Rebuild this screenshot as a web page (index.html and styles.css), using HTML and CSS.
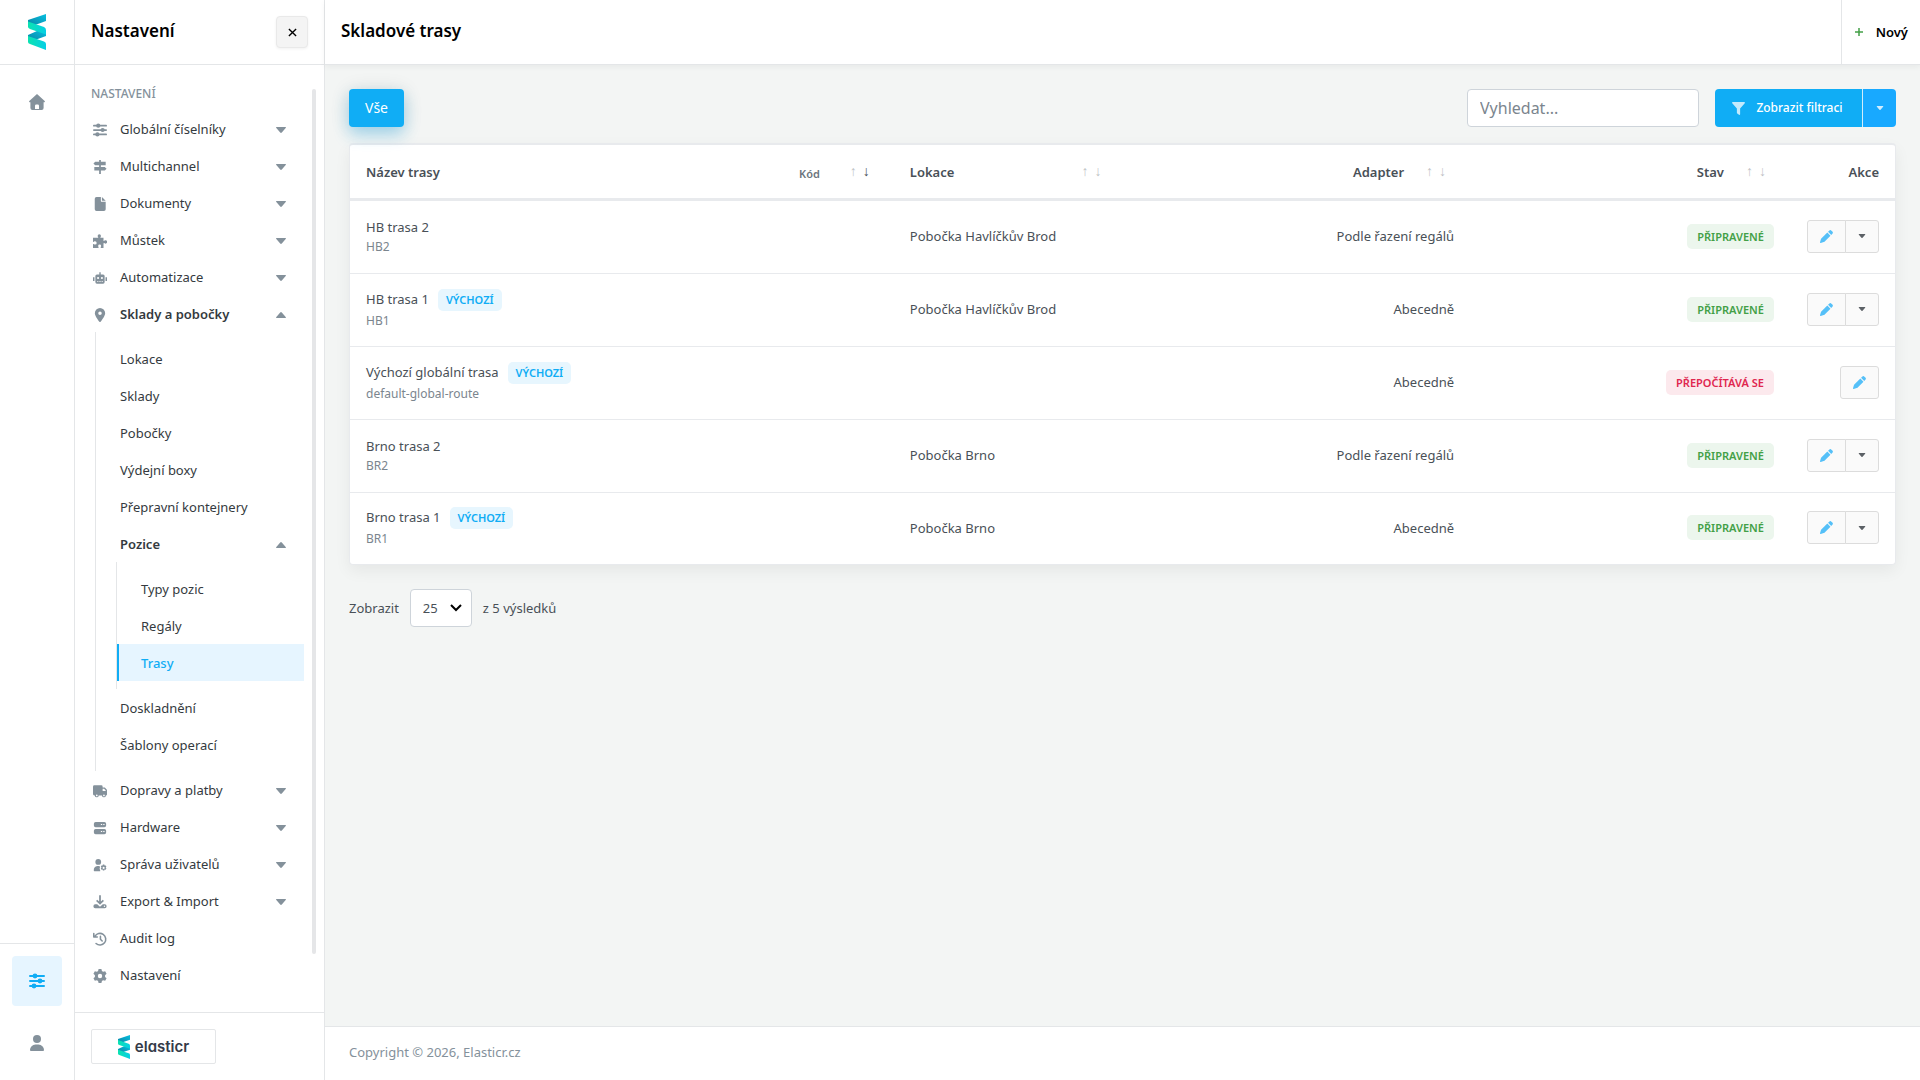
FILE: index.html
```
<!DOCTYPE html>
<html lang="cs">
<head>
    <meta charset="UTF-8">
    <meta name="viewport" content="width=device-width, initial-scale=1.0">
    <title>Skladové trasy</title>
    <link rel="stylesheet" href="styles.css">
</head>
<body>
    <svg class="sprite" aria-hidden="true">
        <defs>
            <linearGradient id="ribbon-dark" x1="0" y1="1" x2="1" y2="0">
                <stop offset="0" stop-color="#0a86a8"/>
                <stop offset="1" stop-color="#06c0e0"/>
            </linearGradient>
            <linearGradient id="ribbon-light" x1="0" y1="0" x2="1" y2="0">
                <stop offset="0" stop-color="#0be3b0"/>
                <stop offset="1" stop-color="#05cfe6"/>
            </linearGradient>
        </defs>
        <symbol id="logo" viewBox="0 0 18 36">
            <path fill="url(#ribbon-dark)" d="M0 6 18 0v7L7 11 0 9z"/>
            <path fill="url(#ribbon-dark)" d="M18 16v6L7 26 0 23v-2l9-4z"/>
            <path fill="url(#ribbon-light)" d="M0 7.500l16 5.500q2 1 2 3v4.500L2 15q-2-1-2-2z"/>
            <path fill="url(#ribbon-light)" d="M0 22l16 5.500q2 .5 2 2.500v6L2 30q-2-.5-2-2z"/>
        </symbol>
        <symbol id="home" viewBox="0 0 16 16">
            <path fill-rule="evenodd" d="M8 0l7.700 6.900q.6.700-.2 1.300h-.9V14a2 2 0 0 1-2 2H3.400a2 2 0 0 1-2-2V8.200H.5Q-.3 7.600.3 6.900zM6 15h4v-3.200A1.300 1.300 0 0 0 8.700 10.500H7.300A1.300 1.300 0 0 0 6 11.800z"/>
        </symbol>
        <symbol id="sliders" viewBox="0 0 16 16">
            <path d="M1 2h14a1 1 0 0 1 0 2H1a1 1 0 0 1 0-2zM1 7h14a1 1 0 0 1 0 2H1a1 1 0 0 1 0-2zM1 12h14a1 1 0 0 1 0 2H1a1 1 0 0 1 0-2z"/>
            <circle cx="6" cy="3" r="2.400"/><circle cx="11" cy="8" r="2.400"/><circle cx="5" cy="13" r="2.400"/>
        </symbol>
        <symbol id="signs" viewBox="0 0 16 16">
            <path d="M7 0h2v2h5.500v4H9v2h4.500l2 2-2 2H9v4H7v-4H1.500V8H7V6H2.500l-2-2 2-2H7z"/>
        </symbol>
        <symbol id="file" viewBox="0 0 16 16">
            <path d="M4 0h5v4.500a1 1 0 0 0 1 1h4.500V14a2 2 0 0 1-2 2H4a2 2 0 0 1-2-2V2a2 2 0 0 1 2-2zM10.200 0l4.300 4.300h-4.300z"/>
        </symbol>
        <symbol id="puzzle" viewBox="0 0 16 16">
            <path d="M5.300 2.200a1.900 1.900 0 0 1 3.800 0c0 .8-.7 1.100-.7 1.700 0 .3.300.5.600.5h3v3c0 .4.200.6.500.6.600 0 .9-.8 1.800-.8a1.900 1.900 0 0 1 0 3.800c-.9 0-1.200-.7-1.800-.7-.3 0-.5.200-.5.600V16H9.300c-.4 0-.6-.2-.6-.5 0-.6.600-.9.600-1.700a1.700 1.700 0 0 0-3.400 0c0 .8.6 1.100.6 1.700 0 .3-.2.500-.6.500H0v-4c0-.4.200-.6.500-.6.600 0 .9.700 1.800.7a1.900 1.900 0 0 0 0-3.800c-.9 0-1.200.8-1.800.8-.3 0-.5-.2-.5-.6V4.400h5.400c.4 0 .6-.2.600-.5 0-.6-.7-.9-.7-1.700z"/>
        </symbol>
        <symbol id="robot" viewBox="0 0 16 16">
            <path fill-rule="evenodd" d="M7.200 1.500h1.600V4h2.700A1.800 1.800 0 0 1 13.300 5.800v6.900a1.800 1.800 0 0 1-1.800 1.800h-7a1.800 1.800 0 0 1-1.800-1.800V5.800A1.800 1.800 0 0 1 4.500 4h2.700zM4.600 8a1.200 1.200 0 1 0 2.400 0 1.200 1.200 0 0 0-2.400 0zM9 8a1.200 1.200 0 1 0 2.400 0A1.200 1.200 0 0 0 9 8zM4.700 11.300v1h1.500v-1zm2.500 0v1h1.600v-1zm2.600 0v1h1.500v-1zM0 7h1.700v4.500H0zM14.300 7H16v4.500h-1.700z"/>
        </symbol>
        <symbol id="pin" viewBox="0 0 16 16">
            <path fill-rule="evenodd" d="M8 0a5.900 5.900 0 0 1 5.900 5.900C13.900 8.600 10.400 13.400 8.700 15.600a.9.900 0 0 1-1.400 0C5.600 13.400 2.100 8.600 2.100 5.900A5.900 5.900 0 0 1 8 0zM6 6a2 2 0 1 0 4 0 2 2 0 0 0-4 0z"/>
        </symbol>
        <symbol id="truck" viewBox="0 0 16 16">
            <path fill-rule="evenodd" d="M1.500 1.500h8A1.500 1.500 0 0 1 11 3v1h1.800c.4 0 .8.200 1 .4l1.800 1.900c.3.200.4.600.4 1V12a1 1 0 0 1-.9 1h-.4a2.200 2.200 0 0 1-4.400 0H6.500a2.200 2.200 0 0 1-4.400 0h-.6A1.500 1.500 0 0 1 0 11.500V3a1.500 1.500 0 0 1 1.500-1.500zM11 5.500V8h3.500v-.6l-1.800-1.900zM3.300 13a1 1 0 1 0 2 0 1 1 0 0 0-2 0zm8.200 0a1 1 0 1 0 2 0 1 1 0 0 0-2 0z"/>
        </symbol>
        <symbol id="server" viewBox="0 0 16 16">
            <path fill-rule="evenodd" d="M3 1h10a2 2 0 0 1 2 2v2a2 2 0 0 1-2 2H3a2 2 0 0 1-2-2V3a2 2 0 0 1 2-2zm0 8h10a2 2 0 0 1 2 2v2a2 2 0 0 1-2 2H3a2 2 0 0 1-2-2v-2a2 2 0 0 1 2-2zM9 3.300v1.400h1.500V3.300zm2.700 0v1.400h1.500V3.300zM9 11.300v1.400h1.500v-1.400zm2.700 0v1.400h1.500v-1.400z"/>
        </symbol>
        <symbol id="user-gear" viewBox="0 0 16 16">
            <circle cx="6" cy="4.500" r="3.300"/>
            <path fill-rule="evenodd" d="M5 9h2.800q-.6.800.2 1.700-1 1.800.2 3.300v1H1.600a.7.700 0 0 1-.7-.7A5 5 0 0 1 5 9zM11.300 7.500h1.600l.4 1.200 1.200-.2.800 1.300-.8 1.100.8 1.100-.8 1.400-1.200-.3-.4 1.300h-1.600l-.4-1.300-1.200.3-.8-1.400.8-1.100-.8-1.100.8-1.300 1.200.2zm-.3 3.400a1.200 1.200 0 1 0 2.300 0 1.200 1.200 0 0 0-2.300 0z"/>
        </symbol>
        <symbol id="download" viewBox="0 0 16 16">
            <path fill-rule="evenodd" d="M7 1a1 1 0 0 1 2 0v6.500l2.200-2.100 1.300 1.400L8 11.200 3.500 6.800l1.300-1.400L7 7.500zM2.500 10.500h2.300L8 13.300l3.200-2.800h2.300a2 2 0 0 1 2 2V13a2 2 0 0 1-2 2h-11a2 2 0 0 1-2-2v-.5a2 2 0 0 1 2-2zM12.300 12.800a.8.800 0 1 0 1.600 0 .8.800 0 0 0-1.600 0z"/>
        </symbol>
        <symbol id="history" viewBox="0 0 16 16">
            <path fill="none" stroke="currentColor" stroke-width="1.800" stroke-linecap="round" stroke-linejoin="round" d="M2.200 5A6.600 6.600 0 1 1 3.500 13.100M.9 1.700v4h4M8.500 5v3.300l2 2"/>
        </symbol>
        <symbol id="gear" viewBox="0 0 16 16">
            <path fill-rule="evenodd" d="M6.400 0h3.200l.6 2.400 1.300.8 2.400-.7 1.600 2.800L13.800 7v2l1.700 1.700-1.600 2.800-2.400-.7-1.300.8-.6 2.400H6.400l-.6-2.400-1.300-.8-2.400.7-1.600-2.800L2.200 9V7L.5 5.300l1.600-2.800 2.400.7 1.300-.8zM5.500 8a2.500 2.500 0 1 0 5 0 2.500 2.500 0 0 0-5 0z"/>
        </symbol>
        <symbol id="user" viewBox="0 0 16 16">
            <circle cx="8" cy="4" r="4"/>
            <path d="M6.500 9.500h3a5.500 5.500 0 0 1 5.500 5.600.9.900 0 0 1-.9.900H1.900a.9.900 0 0 1-.9-.9A5.500 5.500 0 0 1 6.500 9.500z"/>
        </symbol>
        <symbol id="caret" viewBox="0 0 10 6">
            <path d="M.6 0h8.800q1 .2.300 1L5.800 5.500q-.8.800-1.600 0L.3 1Q-.4.200.6 0z"/>
        </symbol>
        <symbol id="filter" viewBox="0 0 16 16">
            <path d="M1 0h14q1.400.3.700 1.600L10 8v7q-.3 1.300-1.400.7L6.500 14a1 1 0 0 1-.5-.8V8L.3 1.600Q-.4.300 1 0z"/>
        </symbol>
        <symbol id="pencil" viewBox="0 0 16 16">
            <path d="M11.300.8a2 2 0 0 1 2.800 0l1.100 1.100a2 2 0 0 1 0 2.800l-1.400 1.400-3.900-3.900zM9 3.100 12.900 7l-7.400 7.400a2 2 0 0 1-.9.500L.9 16q-1 .1-.9-.9l1.100-3.700q.1-.5.500-.9z"/>
        </symbol>
    </svg>

    <div class="app">
        <div class="rail">
            <a class="rail-logo" href="#" aria-label="Elasticr"><svg><use href="#logo"/></svg></a>
            <nav class="rail-main">
                <a class="rail-link" href="#" aria-label="Domů"><svg><use href="#home"/></svg></a>
            </nav>
            <div class="rail-bottom">
                <a class="rail-link active" href="#" aria-label="Nastavení"><svg><use href="#sliders"/></svg></a>
                <a class="rail-link" href="#" aria-label="Uživatel"><svg><use href="#user"/></svg></a>
            </div>
        </div>

        <aside class="sidebar">
            <div class="sidebar-head">
                <h2>Nastavení</h2>
                <button class="close" type="button" aria-label="Zavřít"><svg viewBox="0 0 10 10"><path d="M1 1l8 8M9 1l-8 8"/></svg></button>
            </div>
            <div class="sidebar-body">
                <nav class="menu">
                    <h3>Nastavení</h3>
                    <a class="item" href="#"><svg class="icon"><use href="#sliders"/></svg>Globální číselníky<svg class="caret"><use href="#caret"/></svg></a>
                    <a class="item" href="#"><svg class="icon"><use href="#signs"/></svg>Multichannel<svg class="caret"><use href="#caret"/></svg></a>
                    <a class="item" href="#"><svg class="icon"><use href="#file"/></svg>Dokumenty<svg class="caret"><use href="#caret"/></svg></a>
                    <a class="item" href="#"><svg class="icon"><use href="#puzzle"/></svg>Můstek<svg class="caret"><use href="#caret"/></svg></a>
                    <a class="item" href="#"><svg class="icon"><use href="#robot"/></svg>Automatizace<svg class="caret"><use href="#caret"/></svg></a>
                    <a class="item open" href="#"><svg class="icon"><use href="#pin"/></svg>Sklady a pobočky<svg class="caret"><use href="#caret"/></svg></a>
                    <div class="submenu">
                        <a class="item" href="#">Lokace</a>
                        <a class="item" href="#">Sklady</a>
                        <a class="item" href="#">Pobočky</a>
                        <a class="item" href="#">Výdejní boxy</a>
                        <a class="item" href="#">Přepravní kontejnery</a>
                        <a class="item open" href="#">Pozice<svg class="caret"><use href="#caret"/></svg></a>
                        <div class="submenu">
                            <a class="item" href="#">Typy pozic</a>
                            <a class="item" href="#">Regály</a>
                            <a class="item current" href="#">Trasy</a>
                        </div>
                        <a class="item" href="#">Doskladnění</a>
                        <a class="item" href="#">Šablony operací</a>
                    </div>
                    <a class="item" href="#"><svg class="icon"><use href="#truck"/></svg>Dopravy a platby<svg class="caret"><use href="#caret"/></svg></a>
                    <a class="item" href="#"><svg class="icon"><use href="#server"/></svg>Hardware<svg class="caret"><use href="#caret"/></svg></a>
                    <a class="item" href="#"><svg class="icon"><use href="#user-gear"/></svg>Správa uživatelů<svg class="caret"><use href="#caret"/></svg></a>
                    <a class="item" href="#"><svg class="icon"><use href="#download"/></svg>Export &amp; Import<svg class="caret"><use href="#caret"/></svg></a>
                    <a class="item" href="#"><svg class="icon"><use href="#history"/></svg>Audit log</a>
                    <a class="item" href="#"><svg class="icon"><use href="#gear"/></svg>Nastavení</a>
                </nav>
                <div class="scrollbar"></div>
            </div>
            <div class="sidebar-foot">
                <a class="brand" href="#"><svg><use href="#logo"/></svg>elasticr</a>
            </div>
        </aside>

        <main class="main">
            <header class="topbar">
                <h1>Skladové trasy</h1>
                <button class="new" type="button"><svg viewBox="0 0 10 10"><path d="M5 1v8M1 5h8"/></svg>Nový</button>
            </header>

            <div class="content">
                <div class="toolbar">
                    <button class="all" type="button">Vše</button>
                    <div class="tools">
                        <input class="search" type="text" placeholder="Vyhledat..." aria-label="Vyhledat">
                        <div class="filter">
                            <button class="filter-show" type="button"><svg><use href="#filter"/></svg>Zobrazit filtraci</button>
                            <button class="filter-more" type="button" aria-label="Další filtry"><svg><use href="#caret"/></svg></button>
                        </div>
                    </div>
                </div>

                <table class="routes">
                    <thead>
                        <tr>
                            <th class="col-name"><div class="th">Název trasy<span class="code">Kód</span><span class="sort wide"><i>↑</i><i class="on">↓</i></span></div></th>
                            <th class="col-place"><div class="th spread">Lokace<span class="sort"><i>↑</i><i>↓</i></span></div></th>
                            <th class="col-adapter"><div class="th right">Adapter<span class="sort"><i>↑</i><i>↓</i></span></div></th>
                            <th class="col-state"><div class="th right">Stav<span class="sort"><i>↑</i><i>↓</i></span></div></th>
                            <th class="col-action end">Akce</th>
                        </tr>
                    </thead>
                    <tbody>
                        <tr>
                            <td>HB trasa 2<small>HB2</small></td>
                            <td>Pobočka Havlíčkův Brod</td>
                            <td class="end">Podle řazení regálů</td>
                            <td class="end"><span class="state ready">Připravené</span></td>
                            <td class="end"><div class="actions"><button type="button" aria-label="Upravit"><svg class="pencil"><use href="#pencil"/></svg></button><button class="more" type="button" aria-label="Více"><svg><use href="#caret"/></svg></button></div></td>
                        </tr>
                        <tr>
                            <td>HB trasa 1<span class="default">Výchozí</span><small>HB1</small></td>
                            <td>Pobočka Havlíčkův Brod</td>
                            <td class="end">Abecedně</td>
                            <td class="end"><span class="state ready">Připravené</span></td>
                            <td class="end"><div class="actions"><button type="button" aria-label="Upravit"><svg class="pencil"><use href="#pencil"/></svg></button><button class="more" type="button" aria-label="Více"><svg><use href="#caret"/></svg></button></div></td>
                        </tr>
                        <tr>
                            <td>Výchozí globální trasa<span class="default">Výchozí</span><small>default-global-route</small></td>
                            <td></td>
                            <td class="end">Abecedně</td>
                            <td class="end"><span class="state busy">Přepočítává se</span></td>
                            <td class="end"><div class="actions"><button type="button" aria-label="Upravit"><svg class="pencil"><use href="#pencil"/></svg></button></div></td>
                        </tr>
                        <tr>
                            <td>Brno trasa 2<small>BR2</small></td>
                            <td>Pobočka Brno</td>
                            <td class="end">Podle řazení regálů</td>
                            <td class="end"><span class="state ready">Připravené</span></td>
                            <td class="end"><div class="actions"><button type="button" aria-label="Upravit"><svg class="pencil"><use href="#pencil"/></svg></button><button class="more" type="button" aria-label="Více"><svg><use href="#caret"/></svg></button></div></td>
                        </tr>
                        <tr>
                            <td>Brno trasa 1<span class="default">Výchozí</span><small>BR1</small></td>
                            <td>Pobočka Brno</td>
                            <td class="end">Abecedně</td>
                            <td class="end"><span class="state ready">Připravené</span></td>
                            <td class="end"><div class="actions"><button type="button" aria-label="Upravit"><svg class="pencil"><use href="#pencil"/></svg></button><button class="more" type="button" aria-label="Více"><svg><use href="#caret"/></svg></button></div></td>
                        </tr>
                    </tbody>
                </table>

                <div class="paging">
                    <label for="per-page">Zobrazit</label>
                    <select id="per-page">
                        <option>25</option>
                        <option>50</option>
                        <option>100</option>
                    </select>
                    <span>z 5 výsledků</span>
                </div>
            </div>

            <footer class="footer">Copyright © 2026, Elasticr.cz</footer>
        </main>
    </div>
</body>
</html>
```
FILE: styles.css
```
* {
    box-sizing: border-box;
}
body {
    margin: 0;
    font-family: "Noto Sans", sans-serif;
    font-size: 13px;
    line-height: 20px;
    color: #495057;
    background-color: #f3f5f4;
}
button, input, select {
    font: inherit;
    color: inherit;
}
button {
    cursor: pointer;
}
a {
    color: inherit;
    text-decoration: none;
}
svg {
    fill: currentColor;
}
h1, h2, h3 {
    margin: 0;
    font-weight: 600;
}
h1, h2 {
    font-size: 17px;
    color: #000;
}
.sprite {
    position: absolute;
    width: 0;
    height: 0;
}
.app {
    display: flex;
    height: 100vh;
}

/* icon rail */
.rail {
    display: flex;
    flex-direction: column;
    width: 75px;
    background-color: #fff;
    border-right: 1px solid #e4e6e8;
}
.rail-logo {
    display: flex;
    align-items: center;
    justify-content: center;
    height: 65px;
    border-bottom: 1px solid #e4e6e8;
}
.rail-logo svg {
    width: 18px;
    height: 36px;
}
.rail-main {
    flex: 1;
    padding: 12px;
}
.rail-bottom {
    padding: 12px;
    border-top: 1px solid #e4e6e8;
}
.rail-link {
    display: flex;
    align-items: center;
    justify-content: center;
    height: 50px;
    border-radius: 4px;
    color: #84919b;
}
.rail-link svg {
    width: 16px;
    height: 16px;
}
.rail-link.active {
    margin-bottom: 12px;
    color: #10adf5;
    background-color: #e6f5ff;
}

/* settings menu */
.sidebar {
    display: flex;
    flex-direction: column;
    width: 250px;
    background-color: #fff;
    border-right: 1px solid #e4e6e8;
}
.sidebar-head {
    display: flex;
    align-items: center;
    justify-content: space-between;
    height: 65px;
    padding: 0 16px;
    border-bottom: 1px solid #e4e6e8;
}
.sidebar-head h2 {
    padding-bottom: 3px;
}
.close {
    display: flex;
    align-items: center;
    justify-content: center;
    width: 32px;
    height: 32px;
    padding: 0;
    border: 1px solid #e9e9e9;
    border-radius: 4px;
    background-color: #f4f4f4;
    box-shadow: 0 1px 3px rgba(0, 0, 0, 0.06);
}
.close svg {
    width: 9px;
    height: 9px;
    stroke: #000;
    stroke-width: 1.5;
}
.sidebar-body {
    display: flex;
    flex: 1;
    min-height: 0;
    padding: 16px 8px 0 0;
}
.menu {
    flex: 1;
    overflow: hidden;
}
.menu h3 {
    padding: 3px 16px 6px;
    font-size: 12px;
    font-weight: 500;
    text-transform: uppercase;
    color: #84919b;
}
.item {
    display: flex;
    align-items: center;
    height: 37px;
    padding: 0 26px 0 16px;
    color: #343a40;
}
.item .icon {
    width: 14px;
    height: 14px;
    margin: 2px 13px 0 2px;
    color: #84919b;
}
.item .caret {
    width: 10px;
    height: 6px;
    margin-top: 2px;
    margin-left: auto;
    color: #84919b;
}
.item.open {
    font-weight: 600;
}
.item.open .caret {
    transform: rotate(180deg);
}
.submenu {
    margin-left: 20px;
    padding: 8px 0;
    border-left: 1px solid #e4e6e8;
}
.submenu .item {
    padding-left: 24px;
}
.submenu .submenu .item {
    margin-right: 8px;
    padding-left: 24px;
}
.submenu .submenu .current {
    padding-left: 22px;
    border-left: 2px solid #10adf5;
    font-weight: 500;
    color: #10adf5;
    background-color: #e6f5ff;
}
.scrollbar {
    width: 4px;
    height: 865px;
    max-height: 93%;
    margin-top: 8px;
    border-radius: 2px;
    background-color: #e5e6e8;
}
.sidebar-foot {
    padding: 16px;
    border-top: 1px solid #e4e6e8;
}
.brand {
    display: flex;
    align-items: center;
    justify-content: center;
    gap: 5px;
    width: 125px;
    height: 35px;
    border: 1px solid #e4e6e8;
    border-radius: 2px;
    font-family: Inter, sans-serif;
    font-size: 15px;
    font-weight: 600;
    font-feature-settings: "cv11";
    color: #343a48;
}
.brand svg {
    width: 12px;
    height: 24px;
}

/* page */
.main {
    display: flex;
    flex: 1;
    flex-direction: column;
    min-width: 0;
}
.topbar {
    display: flex;
    align-items: center;
    justify-content: space-between;
    height: 65px;
    padding-left: 16px;
    border-bottom: 1px solid #e4e6e8;
    background-color: #fff;
    box-shadow: 0 2px 6px rgba(0, 0, 0, 0.05);
}
.topbar h1 {
    padding-bottom: 3px;
}
.new {
    display: flex;
    align-items: center;
    gap: 12px;
    height: 64px;
    padding: 0 12px;
    border: 0;
    border-left: 1px solid #e4e6e8;
    background-color: #fff;
    font-weight: 600;
    color: #000;
}
.new svg {
    width: 10px;
    height: 10px;
    stroke: #43a047;
    stroke-width: 1.5;
}
.content {
    flex: 1;
    padding: 24px;
}
.toolbar, .tools {
    display: flex;
    justify-content: space-between;
}
.tools {
    gap: 16px;
}
.all {
    height: 38px;
    padding: 0 16px;
    border: 0;
    border-radius: 4px;
    background-color: #10adf5;
    box-shadow: 0 8px 16px rgba(16, 173, 245, 0.3), 0 2px 20px rgba(0, 0, 0, 0.12);
    font-size: 14px;
    color: #fff;
}
.search {
    width: 232px;
    height: 38px;
    padding: 0 12px;
    border: 1px solid #ced4da;
    border-radius: 4px;
    background-color: #fff;
    font-size: 16px;
}
.search::placeholder {
    color: #7b858e;
}
.filter {
    display: flex;
}
.filter button {
    display: flex;
    align-items: center;
    justify-content: center;
    height: 38px;
    border: 0;
    font-size: 12px;
    font-weight: 500;
    color: #fff;
}
.filter .filter-show {
    width: 147px;
    gap: 11px;
    padding: 0 2px 0 0;
    border-radius: 4px 0 0 4px;
    background-color: #10adf5;
}
.filter-show svg {
    width: 13px;
    height: 13px;
    opacity: 0.75;
}
.filter .filter-more {
    width: 34px;
    padding: 0;
    border-left: 1px solid #d3ecfb;
    border-radius: 0 4px 4px 0;
    background-color: #18a9ff;
}
.filter-more svg {
    width: 8px;
    height: 4px;
    opacity: 0.8;
}

.routes {
    width: 100%;
    margin-top: 16px;
    table-layout: fixed;
    border: 1px solid #e8eaed;
    border-top-width: 2px;
    border-radius: 4px;
    border-spacing: 0;
    background-color: #fff;
    box-shadow: 0 6px 16px rgba(0, 0, 0, 0.06);
}
.routes th, .routes td {
    padding: 0 16px;
    text-align: left;
}
.routes th {
    height: 56px;
    border-bottom: 3px solid #e8eaed;
    font-weight: 600;
}
.routes td {
    height: 73px;
    padding-bottom: 2px;
    border-bottom: 1px solid #e8eaed;
}
.routes tr:last-child td {
    height: 71px;
    border-bottom: 0;
}
.routes .end {
    text-align: right;
}
.col-name {
    width: 35.2%;
}
.col-place {
    width: 15%;
}
.col-adapter {
    width: 22.3%;
}
.col-state {
    width: 20.7%;
}
.th {
    display: flex;
    align-items: center;
    padding-right: 8px;
}
.th.spread {
    justify-content: space-between;
}
.th.right {
    justify-content: flex-end;
}
.code {
    margin-left: auto;
    padding-top: 4px;
    font-size: 11px;
    color: #6c757d;
}
.sort {
    display: flex;
    gap: 6px;
    margin-left: 22px;
    font-family: "Liberation Serif", serif;
    font-size: 14px;
    font-weight: 400;
}
.sort.wide {
    margin-left: 30px;
}
.sort i {
    font-style: normal;
    opacity: 0.35;
}
.sort .on {
    opacity: 1;
}
.routes small {
    display: block;
    font-size: 12px;
    line-height: 19px;
    color: #7b858e;
}
.default, .state {
    display: inline-block;
    border-radius: 5px;
    font-size: 11px;
    font-weight: 600;
    text-transform: uppercase;
}
.default {
    margin-left: 9px;
    padding: 0 8px;
    line-height: 22px;
    color: #10adf5;
    background-color: #e7f6fe;
}
.state {
    padding: 0 10px;
    line-height: 25px;
}
.state.ready {
    color: #43a047;
    background-color: #ecf6ed;
}
.state.busy {
    color: #e0264f;
    background-color: #fce9ed;
}
.actions {
    display: flex;
    justify-content: flex-end;
}
.actions button {
    display: flex;
    align-items: center;
    justify-content: center;
    width: 39px;
    height: 33px;
    padding: 0;
    border: 1px solid #dcdcdc;
    border-radius: 3px;
    background-color: #fafafa;
    color: #55c0f8;
}
.actions button:not(:last-child) {
    border-radius: 3px 0 0 3px;
}
.actions .more {
    width: 34px;
    margin-left: -1px;
    border-radius: 0 3px 3px 0;
    color: #5c6166;
}
.actions svg {
    width: 8px;
    height: 4px;
}
.actions .pencil {
    width: 13px;
    height: 13px;
}

.paging {
    display: flex;
    align-items: center;
    gap: 11px;
    margin-top: 24px;
}
.paging select {
    appearance: none;
    height: 38px;
    width: 62px;
    padding: 0 12px;
    border: 1px solid #ced4da;
    border-radius: 4px;
    background: #fff url("data:image/svg+xml,%3Csvg xmlns='http://www.w3.org/2000/svg' viewBox='0 0 12 8'%3E%3Cpath d='M1 1l5 5 5-5' fill='none' stroke='%23000' stroke-width='2'/%3E%3C/svg%3E") no-repeat right 9px center / 12px 8px;
}
.footer {
    padding: 15px 24px 18px;
    border-top: 1px solid #e4e6e8;
    background-color: #fff;
    color: #84919b;
}
```
